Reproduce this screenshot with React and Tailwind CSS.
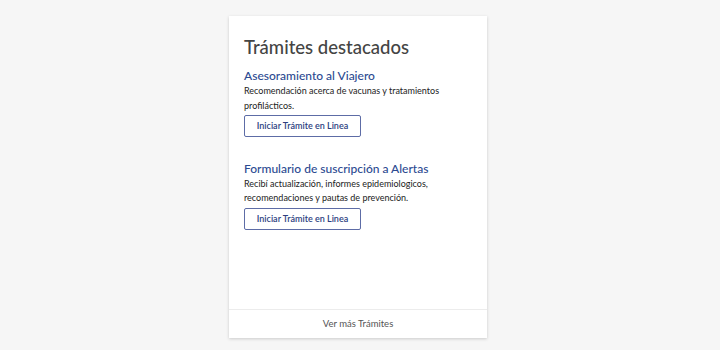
export default function App() {
  const font = { fontFamily: 'Lato, "Open Sans", sans-serif' };
  return (
    <div className="w-[720px] h-[350px] bg-[#f6f6f6] flex justify-center pt-[16px] pr-[4px]" style={font}>
      <div className="w-[258px] h-[322px] bg-white shadow-[0_1px_3px_rgba(0,0,0,0.18)] flex flex-col">
        <div className="flex-1 px-[15px] pt-[19px]">
          <h2 className="text-[18.5px] leading-[24px] text-[#444] font-medium">Trámites destacados</h2>
          <div className="mt-[9px]">
            <h3 className="text-[12px] leading-[16px] text-[#2c4a91] font-medium">Asesoramiento al Viajero</h3>
            <p className="text-[9px] leading-[14.5px] text-[#222]">Recomendación acerca de vacunas y tratamientos profilácticos.</p>
            <button className="block mt-[2px] h-[22px] w-[117px] border border-[#5d6ca6] rounded-[2px] text-[9px] font-semibold text-[#2d3f7f]">Iniciar Trámite en Linea</button>
          </div>
          <div className="mt-[24px]">
            <h3 className="text-[12px] leading-[16px] text-[#2c4a91] font-medium">Formulario de suscripción a Alertas</h3>
            <p className="text-[9px] leading-[14px] text-[#222]">Recibí actualización, informes epidemiologicos, recomendaciones y pautas de prevención.</p>
            <button className="block mt-[3px] h-[22px] w-[117px] border border-[#5d6ca6] rounded-[2px] text-[9px] font-semibold text-[#2d3f7f]">Iniciar Trámite en Linea</button>
          </div>
        </div>
        <div className="h-[29px] border-t border-[#ececec] flex items-center justify-center text-[9.5px] text-[#555]">Ver más Trámites</div>
      </div>
    </div>
  );
}
